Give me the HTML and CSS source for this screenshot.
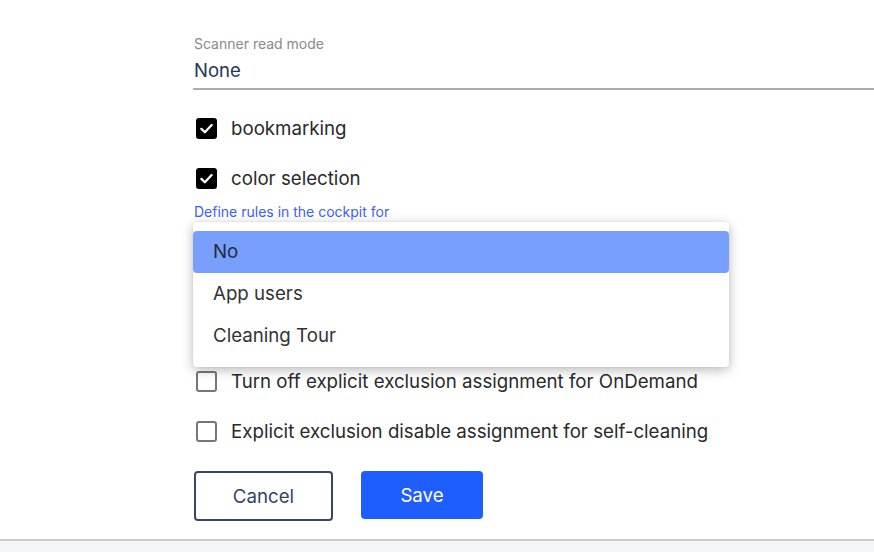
FILE: index.html
```html
<!DOCTYPE html>
<html>
<head>
<meta charset="utf-8">
<link rel="stylesheet" href="styles.css">
</head>
<body>
<div class="page">
  <div class="form">
    <div class="field">
      <div class="field-label">Scanner read mode</div>
      <div class="field-value">None</div>
    </div>
    <label class="check-row"><span class="box checked"><svg viewBox="0 0 20 20"><path d="M4.6 10.4 L8.3 14 L15.4 6.4" fill="none" stroke="#fff" stroke-width="2.4" stroke-linecap="round" stroke-linejoin="round"/></svg></span><span class="check-text">bookmarking</span></label>
    <label class="check-row"><span class="box checked"><svg viewBox="0 0 20 20"><path d="M4.6 10.4 L8.3 14 L15.4 6.4" fill="none" stroke="#fff" stroke-width="2.4" stroke-linecap="round" stroke-linejoin="round"/></svg></span><span class="check-text">color selection</span></label>
    <div class="select-field">
      <div class="select-label">Define rules in the cockpit for</div>
      <div class="select-area">
        <div class="menu">
          <div class="menu-item active">No</div>
          <div class="menu-item">App users</div>
          <div class="menu-item">Cleaning Tour</div>
        </div>
      </div>
    </div>
    <label class="check-row"><span class="box"></span><span class="check-text">Turn off explicit exclusion assignment for OnDemand</span></label>
    <label class="check-row"><span class="box"></span><span class="check-text">Explicit exclusion disable assignment for self-cleaning</span></label>
    <div class="actions">
      <button class="btn btn-cancel">Cancel</button>
      <button class="btn btn-save">Save</button>
    </div>
  </div>
  <div class="footer"></div>
</div>
</body>
</html>
```
FILE: styles.css
```css
html, body {
  margin: 0;
  padding: 0;
  background: #ffffff;
  font-family: Inter, "Noto Sans", "Liberation Sans", sans-serif;
}
.page {
  width: 874px;
  height: 552px;
  display: flex;
  flex-direction: column;
  overflow: hidden;
}
.form {
  flex: 1;
  padding: 35px 0 0 193px;
  display: flex;
  flex-direction: column;
}
.field {
  display: flex;
  flex-direction: column;
  border-bottom: 2px solid #adadad;
  padding-left: 1px;
}
.field-label {
  font-size: 14px;
  line-height: 17px;
  color: #8a8a8a;
}
.field-value {
  font-size: 18.5px;
  line-height: 24px;
  color: #25355a;
  margin-top: 6px;
  padding-bottom: 6px;
}
.check-row {
  display: flex;
  align-items: center;
  height: 30px;
  margin-top: 20px;
  padding-left: 3px;
}
.field + .check-row {
  margin-top: 23px;
}
.box {
  width: 17px;
  height: 17px;
  border: 2px solid #777777;
  border-radius: 3px;
  box-sizing: content-box;
  display: flex;
  align-items: center;
  justify-content: center;
  flex: none;
}
.box.checked {
  background: #000000;
  border-color: #000000;
}
.box svg {
  width: 19px;
  height: 19px;
  flex: none;
}
.check-text {
  margin-left: 14px;
  font-size: 18.7px;
  color: #2a2a2a;
}
.select-field {
  margin-top: 10px;
  display: flex;
  flex-direction: column;
}
.select-label {
  font-size: 14px;
  line-height: 17px;
  color: #4060f5;
  padding-left: 1px;
}
.select-area {
  position: relative;
  height: 126px;
  margin-right: 145px;
}
.menu {
  position: absolute;
  top: 2px;
  left: 0;
  right: 0;
  height: 145px;
  box-sizing: border-box;
  padding-top: 9px;
  background: #ffffff;
  border-radius: 4px;
  box-shadow: 0 3px 12px rgba(0, 0, 0, 0.28), 0 0 2px rgba(0, 0, 0, 0.08);
  z-index: 5;
}
.menu-item {
  height: 42px;
  line-height: 42px;
  padding-left: 20px;
  font-size: 18.7px;
  color: #333333;
  border-radius: 4px;
}
.menu-item.active {
  background: #789ffc;
  color: #1f2a44;
}
.actions {
  display: flex;
  gap: 28px;
  margin-top: 25px;
  padding-left: 1px;
}
.btn {
  font-family: inherit;
  font-size: 18.7px;
  border-radius: 4px;
  cursor: pointer;
}
.btn-cancel {
  width: 139px;
  height: 50px;
  background: #ffffff;
  border: 2px solid #3a4668;
  color: #34435f;
}
.btn-save {
  width: 122px;
  height: 48px;
  background: #1f5efe;
  border: none;
  color: #ffffff;
}
.footer {
  height: 11px;
  border-top: 2px solid #cccccc;
  background: #f4f6f9;
}
```
